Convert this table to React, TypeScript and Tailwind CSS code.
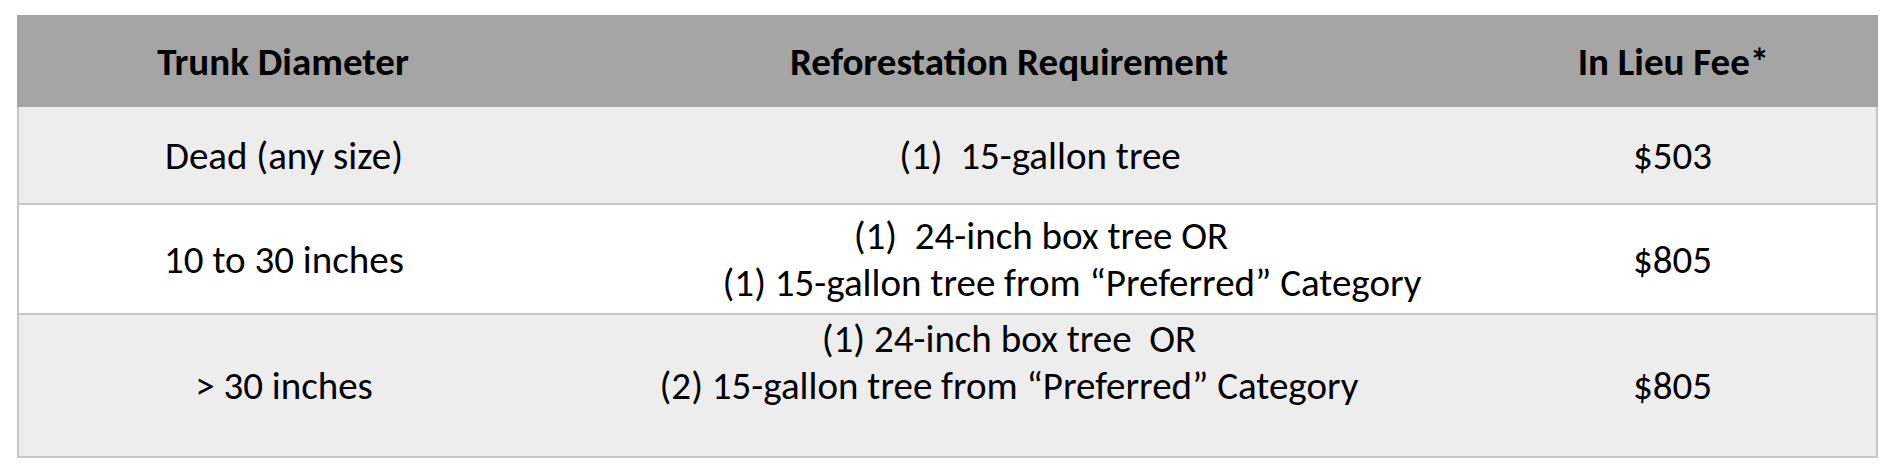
import React from "react";

const font = "font-['Carlito','Lato',sans-serif]";

export default function App() {
  return (
    <div className={`w-[1886px] h-[468px] bg-white pt-[15px] pl-[17px] text-[39px] leading-[47px] text-black ${font}`}>
      <div className="w-[1861px]">
        {/* Header */}
        <div className="grid grid-cols-[532px_920px_409px] h-[92px] bg-[#a5a5a5] font-bold">
          <div className="flex items-center justify-center">Trunk Diameter</div>
          <div className="flex items-center justify-center">Reforestation Requirement</div>
          <div className="flex items-center justify-center">In Lieu Fee*</div>
        </div>
        {/* Body */}
        <div className="border-x-2 border-b-2 border-[#c6c6c6]">
          <div className="grid grid-cols-[530px_920px_407px] h-[98px] bg-[#ededed] border-b-2 border-[#c6c6c6]">
            <div className="flex items-center justify-center">Dead (any size)</div>
            <div className="flex items-center justify-center pl-[62px] whitespace-pre">(1)  15-gallon tree</div>
            <div className="flex items-center justify-center">$503</div>
          </div>
          <div className="grid grid-cols-[530px_920px_407px] h-[110px] bg-white border-b-2 border-[#c6c6c6]">
            <div className="flex items-center justify-center">10 to 30 inches</div>
            <div className="flex flex-col justify-center items-center whitespace-pre">
              <div className="pl-[64px]">(1)  24-inch box tree OR</div>
              <div className="pl-[126px]">(1) 15-gallon tree from “Preferred” Category</div>
            </div>
            <div className="flex items-center justify-center">$805</div>
          </div>
          <div className="grid grid-cols-[530px_920px_407px] h-[141px] bg-[#ededed]">
            <div className="flex items-center justify-center">&gt; 30 inches</div>
            <div className="flex flex-col items-center whitespace-pre">
              <div>(1) 24-inch box tree  OR</div>
              <div>(2) 15-gallon tree from “Preferred” Category</div>
              <div>{"\u00a0"}</div>
            </div>
            <div className="flex items-center justify-center">$805</div>
          </div>
        </div>
      </div>
    </div>
  );
}
